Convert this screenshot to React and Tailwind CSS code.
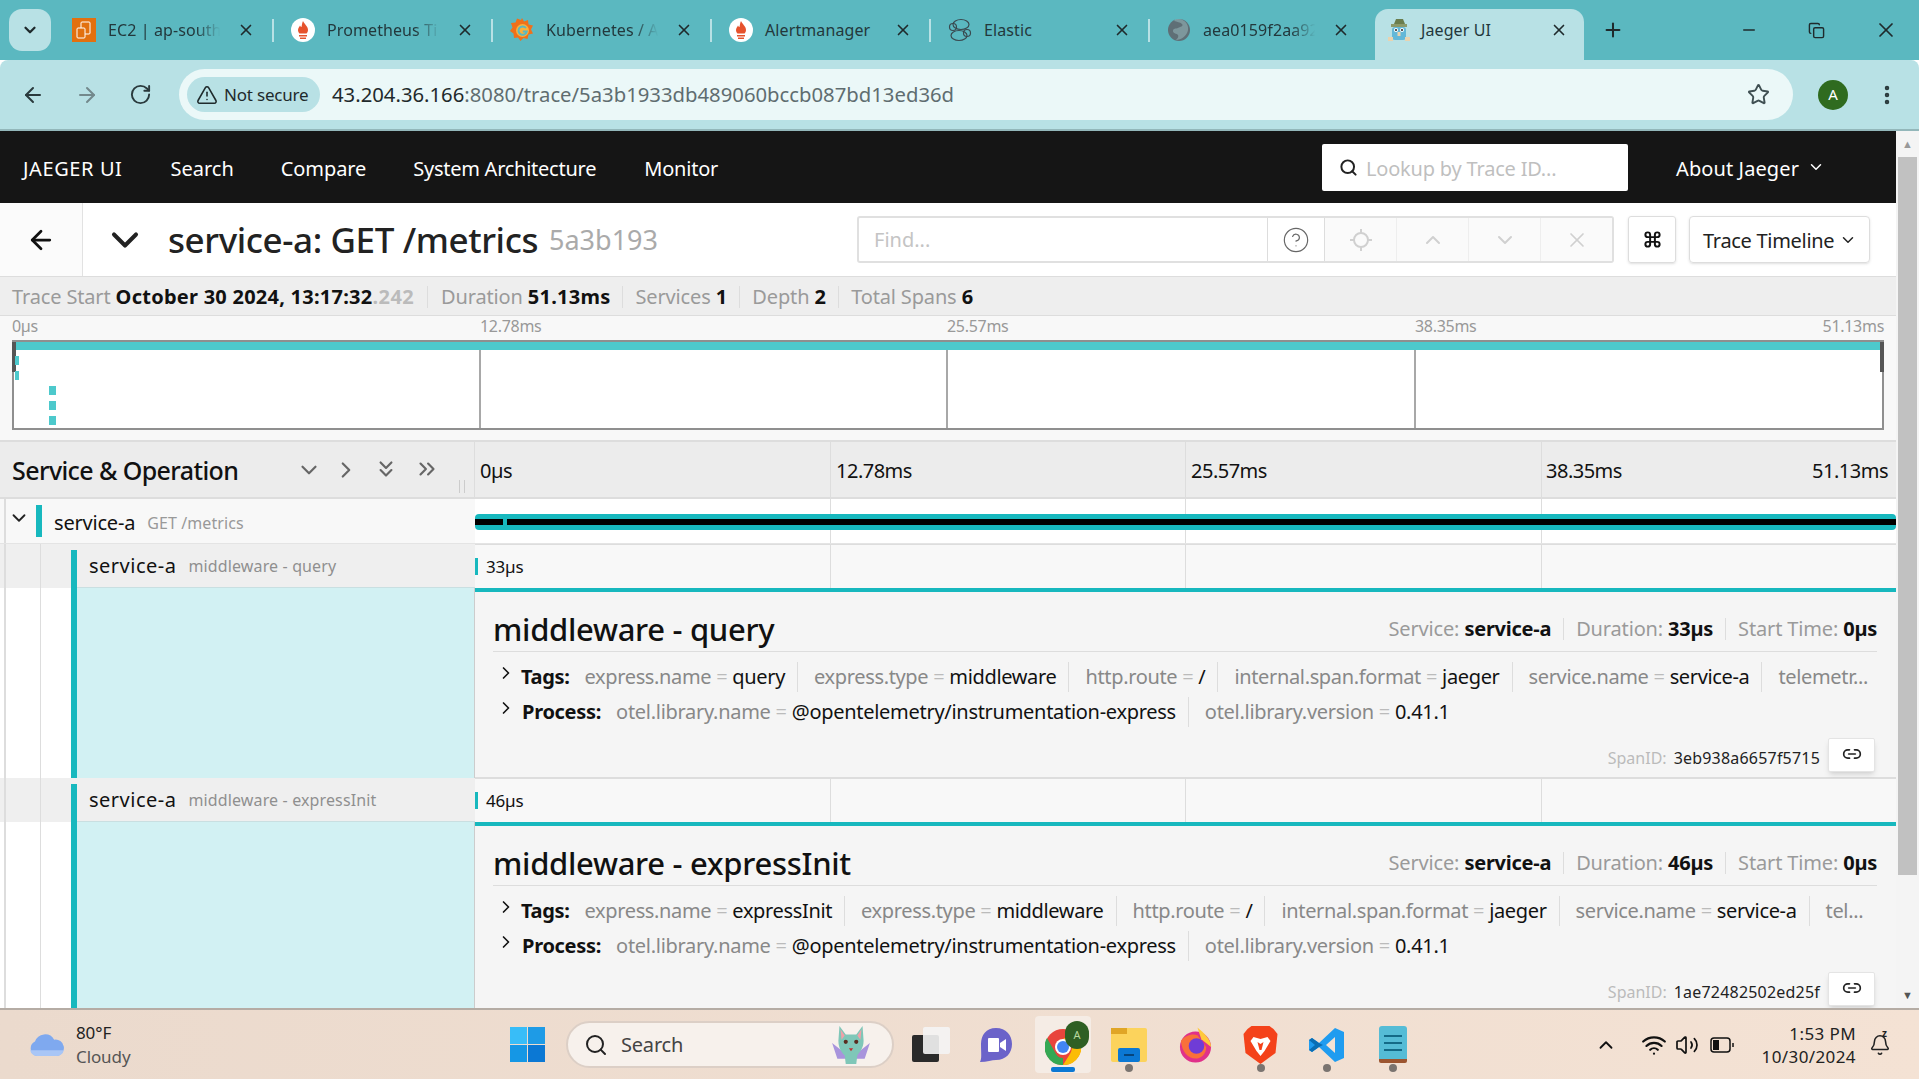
import { ArrowLeft, ArrowRight, RotateCw, Star, EllipsisVertical, ChevronDown, ChevronUp, ChevronRight, ChevronsDown, ChevronsRight, Search, TriangleAlert, X, Plus, Minus, Copy, CircleHelp, Command, Link2, Wifi, Volume2, Bell } from 'lucide-react';

const Flame = () => (
  <svg viewBox="0 0 24 24" className="w-6 h-6 shrink-0">
    <circle cx="12" cy="12" r="12" fill="#fff" />
    <path d="M12 3c1 3 5 5 5 9 0 2-1 3-1.500 3.500H8.500C8 15 7 14 7 12c0-2 1.500-3 2-4.500.5 1 1 1.500 1.500 1.500C11 7 11 5 12 3z" fill="#e6522c" />
    <path d="M8 17h8v1.500H8zM9 19.500h6V21H9z" fill="#e6522c" />
  </svg>
);

const Grafana = () => (
  <svg viewBox="0 0 24 24" className="w-6 h-6 shrink-0">
    <path d="M12 0l2 3.500 4-1.500 .500 4.500 4.500 1-2 4 2 4-4.500 1-1 4.500-4-1-3 3-2.500-3.500-4 .500-.500-4.500-3.500-2.500 2.500-3.500-1.500-4.500 4.500-.500 1.500-4 4 1.500z" fill="#f0701a" />
    <circle cx="12.500" cy="12.500" r="6.500" fill="#fbb03b" />
    <path d="M16 10a4.200 4.200 0 1 0 .8 3.500h-4" fill="none" stroke="#5bb8c0" strokeWidth="2" />
  </svg>
);

const Ec2 = () => (
  <svg viewBox="0 0 24 24" className="w-6 h-6 shrink-0">
    <rect width="24" height="24" fill="#e2700f" />
    <rect x="9" y="4" width="9" height="12" rx="1" fill="none" stroke="#fff" strokeWidth="1" />
    <rect x="5" y="10" width="8" height="10" rx="1" fill="#e2700f" stroke="#fff" strokeWidth="1" />
  </svg>
);

const Elastic = () => (
  <svg viewBox="0 0 24 24" className="w-6 h-6 shrink-0" fill="none" stroke="#3a4a50" strokeWidth="1.200">
    <ellipse cx="13" cy="6.500" rx="8" ry="5" />
    <ellipse cx="11" cy="17.500" rx="8" ry="5" />
    <circle cx="5" cy="9" r="3.500" />
    <circle cx="19" cy="15" r="3.500" />
  </svg>
);

const Globe = () => (
  <svg viewBox="0 0 24 24" className="w-6 h-6 shrink-0">
    <circle cx="12" cy="12" r="11" fill="#5f6f76" />
    <path d="M7 3c3 1 6 1 8 3s-2 3-4 4-5 0-5 3 4 2 5 4-1 4-2 5c5 0 11-4 12-10S17 1 12 1 8 2 7 3z" fill="#b8e1e5" opacity=".35" />
  </svg>
);

const Gopher = () => (
  <svg viewBox="0 0 24 24" className="w-6 h-6 shrink-0">
    <path d="M7 6l2-5h7l2 5z" fill="#6a7d4d" />
    <rect x="4" y="6" width="16" height="3" fill="#8b9a6b" />
    <rect x="5" y="9" width="14" height="13" rx="3" fill="#63b8d8" />
    <circle cx="9" cy="12" r="2" fill="#fff" />
    <circle cx="15" cy="12" r="2" fill="#fff" />
    <circle cx="9" cy="12" r="1" fill="#222" />
    <circle cx="15" cy="12" r="1" fill="#222" />
    <rect x="10.500" y="14" width="3" height="4" fill="#e8d3b0" />
    <rect x="1" y="19" width="5" height="4" fill="#e8d3b0" />
    <rect x="18" y="19" width="5" height="4" fill="#e8d3b0" />
  </svg>
);

const tabs = [
  { title: 'EC2 | ap-south', icon: <Ec2 />, fade: true },
  { title: 'Prometheus Ti', icon: <Flame />, fade: true },
  { title: 'Kubernetes / A', icon: <Grafana />, fade: true },
  { title: 'Alertmanager', icon: <Flame /> },
  { title: 'Elastic', icon: <Elastic /> },
  { title: 'aea0159f2aa92', icon: <Globe />, fade: true },
];

function Tab({ title, icon, fade, last }) {
  return (
    <div className="w-[219px] h-[30px] flex items-center pl-[17px] relative shrink-0">
      {icon}
      <div className="ml-3 w-[125px]">
        <span className={`block w-[122px] whitespace-nowrap text-[16px] text-[#23383c] tracking-[0.1px] ${fade ? '[mask-image:linear-gradient(to_right,black_72%,transparent_92%)]' : ''}`}>{title}</span>
      </div>
      <X size={18} strokeWidth={2.200} className="ml-[4px] text-[#1f2a2c]" />
      {!last && <div className="absolute right-0 top-[4px] w-[2px] h-[23px] bg-[#b8e1e5]"></div>}
    </div>
  );
}

function TabStrip() {
  return (
    <div className="h-[60px] bg-[#5bb8c0] flex items-center shrink-0 relative">
      <div className="ml-[9px] w-[42px] h-[42px] rounded-[13px] bg-[#b8e1e5] flex items-center justify-center mr-[4px]">
        <ChevronDown size={18} strokeWidth={3} className="text-[#1f2a2c]" />
      </div>
      {tabs.map((t, i) => <Tab key={t.title} title={t.title} icon={t.icon} fade={t.fade} last={i === 5} />)}
      <div className="w-[209px] h-[51px] self-end ml-[6px] rounded-t-[13px] bg-[#b8e1e5] flex items-center pl-[12px] pb-[9px] shrink-0">
        <Gopher />
        <span className="ml-[10px] w-[120px] text-[16px] text-[#23383c] tracking-[0.1px]">Jaeger UI</span>
        <X size={18} strokeWidth={2.200} className="ml-[9px] text-[#1f2a2c]" />
      </div>
      <Plus size={22} strokeWidth={2.200} className="ml-[18px] text-[#1f2a2c]" />
      <div className="ml-auto flex items-center text-[#1f2a2c]">
        <Minus size={18} strokeWidth={2} />
        <Copy size={17} strokeWidth={2} className="ml-[50px]" />
        <X size={24} strokeWidth={1.700} className="ml-[49px] mr-[21px]" />
      </div>
    </div>
  );
}

function Toolbar() {
  return (
    <div className="h-[71px] bg-[#b8e1e5] border-b-2 border-[#93b7ba] flex items-center shrink-0 rounded-t-[8px]">
      <ArrowLeft size={24} strokeWidth={2} className="ml-[21px] text-[#2a3a3d]" />
      <ArrowRight size={24} strokeWidth={2} className="ml-[30px] text-[#73898c]" />
      <RotateCw size={23} strokeWidth={2} className="ml-[30px] text-[#2a3a3d]" />
      <div className="ml-[27px] w-[1614px] h-[51px] rounded-full bg-[#ebf8f8] flex items-center pl-[8px]">
        <div className="h-[35px] w-[133px] rounded-full bg-[#b8e1e5] flex items-center pl-[9px] gap-[6px] whitespace-nowrap">
          <TriangleAlert size={22} strokeWidth={1.700} className="text-[#1f2a2c]" />
          <span className="text-[17px] text-[#1f2a2c] tracking-[-0.2px]">Not secure</span>
        </div>
        <span className="ml-[12px] text-[20.300px] whitespace-nowrap text-[#5f6d70]"><span className="text-[#1f2a2c]">43.204.36.166</span>:8080/trace/5a3b1933db489060bccb087bd13ed36d</span>
        <Star size={23} strokeWidth={2} className="ml-auto mr-[23px] text-[#3f4f52]" />
      </div>
      <div className="ml-[25px] w-[30px] h-[30px] rounded-full bg-[#2f6b1f] text-white text-[15px] flex items-center justify-center">A</div>
      <EllipsisVertical size={24} strokeWidth={2.500} className="ml-[27px] text-[#2a3a3d]" />
    </div>
  );
}

function JaegerNav() {
  return (
    <div className="h-[72px] bg-[#151515] flex items-center text-white text-[20px] shrink-0">
      <span className="ml-[23px] pt-[3px] tracking-[0.6px]">JAEGER UI</span>
      <span className="ml-[48px] pt-[3px]">Search</span>
      <span className="ml-[47px] pt-[3px] tracking-[-0.1px]">Compare</span>
      <span className="ml-[47px] pt-[3px] tracking-[-0.25px]">System Architecture</span>
      <span className="ml-[48px] pt-[3px] tracking-[-0.2px]">Monitor</span>
      <div className="ml-auto w-[306px] h-[47px] bg-white rounded-[2px] flex items-center pl-[17px] gap-[8px]">
        <Search size={19} strokeWidth={2.500} className="text-[#222]" />
        <span className="text-[#bfbfbf] pt-[3px] tracking-[-0.2px]">Lookup by Trace ID...</span>
      </div>
      <span className="ml-[48px] pt-[3px] tracking-[0.1px]">About Jaeger</span>
      <ChevronDown size={18} strokeWidth={2} className="ml-[8px] mr-[71px]" />
    </div>
  );
}

function TraceHeader() {
  return (
    <div className="h-[74px] bg-white flex items-center border-b border-[#ddd] shrink-0">
      <div className="w-[83px] h-full bg-[#fbfbfb] border-r border-[#e2e2e2] flex items-center justify-center">
        <ArrowLeft size={30} strokeWidth={2.200} className="text-[#111]" />
      </div>
      <ChevronDown size={44} strokeWidth={2.200} className="ml-[20px] text-[#222]" />
      <span className="ml-[21px] pt-[1px] text-[35px] text-[#222] font-medium tracking-[-0.4px] whitespace-nowrap">service-a: GET /metrics</span>
      <span className="ml-[11px] pt-[1px] text-[27px] text-[#aaa] whitespace-nowrap">5a3b193</span>
      <div className="ml-auto w-[757px] h-[47px] flex border-2 border-[#e0e0e0] rounded-[3px]">
        <div className="w-[409px] flex items-center pl-[15px] pt-[1px] text-[20px] text-[#c4c4c4] border-r border-[#ddd]">Find...</div>
        <div className="w-[57px] flex items-center justify-center border-r border-[#ddd]"><CircleHelp size={28} strokeWidth={1} className="text-[#666]" /></div>
        <div className="flex-1 flex items-center justify-center bg-[#fafafa] border-r border-[#eee]"><svg viewBox="0 0 24 24" className="w-[24px] h-[24px]" fill="none" stroke="#d0d0d0" strokeWidth="2"><circle cx="12" cy="12" r="7" /><path d="M12 1v4M12 19v4M1 12h4M19 12h4" /></svg></div>
        <div className="flex-1 flex items-center justify-center bg-[#fafafa] border-r border-[#eee]"><ChevronUp size={24} strokeWidth={2} className="text-[#d0d0d0]" /></div>
        <div className="flex-1 flex items-center justify-center bg-[#fafafa] border-r border-[#eee]"><ChevronDown size={24} strokeWidth={2} className="text-[#d0d0d0]" /></div>
        <div className="flex-1 flex items-center justify-center bg-[#fafafa]"><X size={24} strokeWidth={1.700} className="text-[#d0d0d0]" /></div>
      </div>
      <div className="ml-[14px] w-[48px] h-[47px] border border-[#ddd] rounded-[3px] shadow-sm flex items-center justify-center"><Command size={19} strokeWidth={2.500} className="text-[#111]" /></div>
      <div className="ml-[13px] mr-[26px] w-[181px] h-[47px] border border-[#ddd] rounded-[4px] shadow-sm flex items-center pl-[13px] text-[20px] text-[#222] tracking-[-0.3px] whitespace-nowrap">
        <span className="pt-[2px]">Trace Timeline</span>
        <ChevronDown size={18} strokeWidth={2} className="ml-[5px]" />
      </div>
    </div>
  );
}

function Stat({ label, value, extra, wide }) {
  return (
    <span className="whitespace-nowrap">
      <span className="text-[#9a9a9a] tracking-[-0.15px]">{label} </span>
      <span className={`font-bold text-[#111] ${wide ? 'tracking-[0.25px]' : 'tracking-[-0.25px]'}`}>{value}</span>
      {extra && <span className="font-bold text-[#bbb] tracking-[0.4px]">{extra}</span>}
    </span>
  );
}

function SummaryRow() {
  return (
    <div className="h-[39px] bg-[#eee] flex items-center text-[20px] pl-[12px] pt-[2px] shrink-0 border-b border-[#ddd]">
      <Stat wide label="Trace Start" value="October 30 2024, 13:17:32" extra=".242" />
      <div className="w-px h-[22px] bg-[#ddd] mx-[13px]"></div>
      <Stat wide label="Duration" value="51.13ms" />
      <div className="w-px h-[22px] bg-[#ddd] mx-[12px]"></div>
      <Stat wide label="Services" value="1" />
      <div className="w-px h-[22px] bg-[#ddd] mx-[12px]"></div>
      <Stat wide label="Depth" value="2" />
      <div className="w-px h-[22px] bg-[#ddd] mx-[12px]"></div>
      <Stat wide label="Total Spans" value="6" />
    </div>
  );
}

function Minimap() {
  return (
    <div className="h-[124px] bg-[#f8f8f8] border-b-2 border-[#ddd] px-[12px] shrink-0 box-content">
      <div className="h-[24px] flex text-[16px] text-[#999] tracking-[-0.3px] items-center pb-[4px]">
        <span className="w-[468px]">0µs</span>
        <span className="w-[467px]">12.78ms</span>
        <span className="w-[468px]">25.57ms</span>
        <span className="flex-1">38.35ms</span>
        <span>51.13ms</span>
      </div>
      <div className="h-[90px] bg-white border-2 border-[#8f8f8f] border-t-[#8f8f8f] relative flex">
        <div className="w-[467px] h-full border-r-2 border-[#a8a8a8]"></div>
        <div className="w-[467px] h-full border-r-2 border-[#a8a8a8]"></div>
        <div className="w-[468px] h-full border-r-2 border-[#a8a8a8]"></div>
        <div className="absolute left-0 right-0 top-0 h-[8px] bg-[#4dc9cc]"></div>
        <div className="absolute left-[-2px] top-0 w-[4px] h-[30px] bg-[#555]"></div>
        <div className="absolute right-[-2px] top-0 w-[4px] h-[30px] bg-[#555]"></div>
        <div className="absolute left-[1px] top-[14px] w-[4px] h-[9px] bg-[#4dc9cc]"></div>
        <div className="absolute left-[1px] top-[29px] w-[4px] h-[9px] bg-[#4dc9cc]"></div>
        <div className="absolute left-[35px] top-[44px] w-[7px] h-[9px] bg-[#4dc9cc]"></div>
        <div className="absolute left-[35px] top-[59px] w-[7px] h-[9px] bg-[#4dc9cc]"></div>
        <div className="absolute left-[35px] top-[74px] w-[7px] h-[9px] bg-[#4dc9cc]"></div>
      </div>
    </div>
  );
}

function GridLines() {
  return (
    <div className="absolute inset-0 flex pointer-events-none">
      <div className="w-[355.500px] border-r border-[#ddd]"></div>
      <div className="w-[355.500px] border-r border-[#ddd]"></div>
      <div className="w-[355.500px] border-r border-[#ddd]"></div>
    </div>
  );
}

function ColumnsHeader() {
  return (
    <div className="h-[57px] bg-[#ececec] flex border-b-2 border-[#ddd] shrink-0">
      <div className="w-[475px] flex items-center pl-[12px] border-r border-[#ddd] relative shrink-0">
        <span className="pt-[3px] text-[25px] font-medium tracking-[-0.6px] text-[#111] whitespace-nowrap">Service &amp; Operation</span>
        <ChevronDown size={26} strokeWidth={2} className="absolute left-[296px] top-[15px] text-[#666]" />
        <ChevronRight size={26} strokeWidth={2} className="absolute left-[333px] top-[15px] text-[#666]" />
        <ChevronsDown size={26} strokeWidth={2} className="absolute left-[373px] top-[14px] text-[#666]" />
        <ChevronsRight size={26} strokeWidth={2} className="absolute left-[414px] top-[14px] text-[#666]" />
        <div className="absolute left-[459px] top-[38px] w-[6px] h-[13px] border-x border-[#ccc]"></div>
      </div>
      <div className="flex-1 relative flex items-center pt-[3px] text-[20px] text-[#111] tracking-[-0.5px]">
        <GridLines />
        <span className="ml-[5px] w-[356px]">0µs</span>
        <span className="w-[355px]">12.78ms</span>
        <span className="w-[355px]">25.57ms</span>
        <span className="flex-1">38.35ms</span>
        <span className="mr-[8px]">51.13ms</span>
      </div>
    </div>
  );
}

function RootRow() {
  return (
    <div className="h-[45px] flex border-b border-[#e4e4e4] shrink-0">
      <div className="w-[475px] bg-[#f8f8f8] flex items-center relative shrink-0">
        <div className="absolute left-[4px] top-0 bottom-0 w-[2px] bg-[#ddd]"></div>
        <ChevronDown size={22} strokeWidth={2} className="ml-[8px] text-[#222] -mt-[6px]" />
        <div className="ml-[6px] w-[6px] h-[32px] bg-[#17b8be]"></div>
        <span className="ml-[12px] pt-[3px] text-[20px] text-[#111] tracking-[-0.2px]">service-a</span>
        <span className="ml-[12px] pt-[3px] text-[16px] text-[#999] tracking-[0.1px]">GET /metrics</span>
      </div>
      <div className="flex-1 bg-white relative">
        <GridLines />
        <div className="absolute left-0 right-0 top-[15px] h-[16px] bg-[#17b8be] rounded-[4px] flex items-center">
          <div className="w-full h-[6px] bg-black"></div>
        </div>
        <div className="absolute left-[28px] top-[20px] w-[4px] h-[6px] bg-[#17b8be]"></div>
      </div>
    </div>
  );
}

function Tag({ k, v, sep = true }) {
  return (
    <span className={`whitespace-nowrap pr-[12px] mr-[16px] h-[30px] flex items-center ${sep ? 'border-r border-[#ddd]' : ''}`}>
      <span className="text-[#888]">{k}</span>
      <span className="text-[#bbb] mx-[5px]">=</span>
      <span className="text-[#111]">{v}</span>
    </span>
  );
}

function SpanBlock({ op, duration, tags, more, spanId }) {
  return (
    <div className="flex shrink-0 flex-col">
      <div className="h-[44px] flex shrink-0">
        <div className="w-[475px] bg-[#efefef] relative flex shrink-0">
          <div className="absolute left-[4px] top-0 bottom-0 w-[2px] bg-[#ddd]"></div>
          <div className="absolute left-[40px] top-0 bottom-0 w-px bg-[#ddd]"></div>
          <div className="ml-[71px] mt-[6px] w-[6px] bg-[#17b8be]"></div>
          <div className="flex-1 flex items-center pl-[12px] border-b border-[#c9dfe1] whitespace-nowrap">
            <span className="text-[20px] text-[#111] tracking-[0.5px]">service-a</span>
            <span className="ml-[12px] text-[16px] text-[#8f8f8f] tracking-[0.13px]">middleware - {op}</span>
          </div>
        </div>
        <div className="flex-1 bg-[#f8f8f8] relative flex items-center border-t border-[#ddd]">
          <GridLines />
          <div className="w-[3px] h-[17px] bg-[#17b8be]"></div>
          <span className="ml-[8px] text-[17px] text-[#111] tracking-[-0.2px]">{duration}</span>
        </div>
      </div>
      <div className="h-[190px] flex shrink-0">
        <div className="w-[475px] bg-white relative flex shrink-0 border-r border-[#ccc]">
          <div className="absolute left-[4px] top-0 bottom-0 w-[2px] bg-[#ddd]"></div>
          <div className="absolute left-[40px] top-0 bottom-0 w-px bg-[#ddd]"></div>
          <div className="ml-[71px] w-[6px] bg-[#17b8be]"></div>
          <div className="flex-1 bg-[#d2f1f3]"></div>
        </div>
        <div className="flex-1 min-w-0 bg-[#f5f5f5] border-t-4 border-[#17b8be] border-b border-b-[#ddd] pl-[18px] pr-[19px]">
          <div className="h-[60px] flex items-center justify-between border-b border-[#ddd] pt-[15px]">
            <span className="text-[31px] font-medium tracking-[-0.3px] text-[#111]">middleware - {op}</span>
            <div className="flex items-center text-[20px]">
              <Stat label="Service:" value="service-a" />
              <div className="w-px h-[22px] bg-[#ddd] mx-[12px]"></div>
              <Stat label="Duration:" value={duration} />
              <div className="w-px h-[22px] bg-[#ddd] mx-[12px]"></div>
              <Stat label="Start Time:" value="0µs" />
            </div>
          </div>
          <div className="mt-[10px] h-[30px] flex items-center text-[20px] tracking-[-0.35px] overflow-hidden">
            <ChevronRight size={20} strokeWidth={2} className="text-[#111] -mt-[8px] ml-[3px] shrink-0" />
            <span className="font-bold text-[#111] ml-[5px] mr-[15px]">Tags:</span>
            {tags.map(t => <Tag key={t[0]} k={t[0]} v={t[1]} />)}
            <span className="text-[#888] whitespace-nowrap">{more}</span>
          </div>
          <div className="mt-[5px] h-[30px] flex items-center text-[20px] tracking-[-0.29px]">
            <ChevronRight size={20} strokeWidth={2} className="text-[#111] -mt-[8px] ml-[3px] shrink-0" />
            <span className="font-bold text-[#111] ml-[6px] mr-[15px]">Process:</span>
            <Tag k="otel.library.name" v="@opentelemetry/instrumentation-express" />
            <Tag k="otel.library.version" v="0.41.1" sep={false} />
          </div>
          <div className="mt-[11px] flex items-center justify-end">
            <span className="text-[16px] text-[#bbb] mt-[6px]">SpanID:</span>
            <span className="ml-[7px] text-[16px] text-[#222] mt-[6px] tracking-[0.2px]">{spanId}</span>
            <div className="ml-[8px] mr-[2px] w-[47px] h-[34px] bg-white border border-[#e4e4e4] rounded-[2px] shadow-md flex items-center justify-center"><Link2 size={20} strokeWidth={2} className="text-[#222] -mt-[3px]" /></div>
          </div>
        </div>
      </div>
    </div>
  );
}

function Scrollbar() {
  return (
    <div className="w-[23px] bg-[#f4f4f4] flex flex-col items-center shrink-0 relative">
      <div className="h-[26px] flex items-center justify-center text-[#999] text-[11px]">▲</div>
      <div className="w-[19px] h-[718px] bg-[#c1c1c1]"></div>
      <div className="mt-auto h-[26px] flex items-center justify-center text-[#555] text-[11px]">▼</div>
    </div>
  );
}

const RunDot = ({ bottom }) => <div className={`absolute left-1/2 -translate-x-1/2 w-[8px] h-[8px] rounded-full bg-[#7a7470] ${bottom}`}></div>;

function Taskbar() {
  return (
    <div className="h-[71px] bg-gradient-to-r from-[#ebdacd] to-[#f4e2d4] border-t-2 border-[#b5aca4] flex items-center relative shrink-0 text-[#222]">
      <svg viewBox="0 0 38 26" className="ml-[28px] w-[37px] h-[25px] shrink-0"><path d="M9 25a8 8 0 0 1-2-15 11 11 0 0 1 20-2 8 8 0 0 1 3 17z" fill="#7fa9ef" /><path d="M9 25a8 8 0 0 1-7-6h35a8 8 0 0 1-7 6z" fill="#a9c6f6" /></svg>
      <div className="ml-[11px] w-[80px] leading-[24px] text-[17px] tracking-[-0.1px]">
        <div>80°F</div>
        <div className="text-[#555]">Cloudy</div>
      </div>
      <div className="ml-[354px] w-[35px] h-[35px] grid grid-cols-2 gap-[1px] shrink-0">
        <div className="bg-[#38bdf8]"></div><div className="bg-[#1e9be6]"></div><div className="bg-[#1597e5]"></div><div className="bg-[#0b78d4]"></div>
      </div>
      <div className="ml-[21px] w-[328px] h-[47px] rounded-full bg-[#f7f1ec] border-2 border-[#dccfc6] flex items-center pl-[16px] shrink-0">
        <Search size={24} strokeWidth={2} className="text-[#222]" />
        <span className="ml-[13px] text-[20px] text-[#444] tracking-[-0.2px]">Search</span>
        <svg viewBox="0 0 40 40" className="ml-auto mr-[20px] w-[42px] h-[42px]"><path d="M2 18l10 8 16 0 10-8-5 15-26 0z" fill="#a894dc" /><path d="M9 2l6 8h10l6-8 1 14c0 8-5 12-6 14l-1 8h-10l-1-8c-2-2-6-6-6-14z" fill="#7fc7b8" /><path d="M10 5l4 6-3 4zM30 5l-4 6 3 4z" fill="#f0a0a8" /><circle cx="15" cy="17" r="2" fill="#5a2d20" /><circle cx="25" cy="17" r="2" fill="#5a2d20" /><path d="M18 23h4l-2 3z" fill="#c03030" /></svg>
      </div>
      <div className="ml-[18px] w-[38px] h-[35px] relative shrink-0">
        <div className="absolute left-0 bottom-0 w-[27px] h-[27px] bg-[#2a2a2a] rounded-[2px]"></div>
        <div className="absolute right-0 top-0 w-[27px] h-[27px] bg-[#f4f4f4]/90 rounded-[2px]"></div>
      </div>
      <svg viewBox="0 0 36 36" className="ml-[28px] w-[36px] h-[36px] shrink-0"><path d="M18 1c10 0 16 7 16 16s-6 16-16 16c-4 0-9 2-16 2 2-4 1-8 1-18C3 8 8 1 18 1z" fill="#6b63c9" /><rect x="10" y="11" width="11" height="14" rx="1" fill="#fff" /><path d="M22 16l6-4v12l-6-4z" fill="#fff" /></svg>
      <div className="ml-[21px] w-[56px] h-[57px] bg-[#f5ece5] rounded-[4px] relative shrink-0">
        <svg viewBox="0 0 36 36" className="absolute left-[10px] top-[13px] w-[36px] h-[36px]"><circle cx="18" cy="18" r="18" fill="#e8453c" /><path d="M18 36A18 18 0 0 1 2 9l9 16c2 3 4 4 7 4z" fill="#34a853" /><path d="M18 36a18 18 0 0 0 16-27H18l7 5c3 4 2 7 0 11z" fill="#fbbc05" /><circle cx="18" cy="18" r="8" fill="#fff" /><circle cx="18" cy="18" r="6" fill="#4285f4" /></svg>
        <div className="absolute left-[30px] top-[5px] w-[24px] h-[28px] rounded-full bg-[#2f5f24] text-[#b9d99f] text-[11px] flex items-center justify-center">A</div>
        <div className="absolute left-[16px] bottom-[1px] w-[24px] h-[5px] rounded-[2px] bg-[#0b78d4]"></div>
      </div>
      <div className="ml-[20px] w-[36px] h-[34px] relative shrink-0">
        <div className="absolute inset-0 rounded-[2px] bg-[#fcd35c]"></div>
        <div className="absolute left-0 top-0 w-[16px] h-[6px] bg-[#e0a526]"></div>
        <div className="absolute left-[7px] top-[20px] w-[22px] h-[14px] rounded-[2px] bg-[#0b78d4]"></div>
        <div className="absolute left-[13px] top-[26px] w-[10px] h-[2px] bg-[#06457c]"></div>
        <RunDot bottom="bottom-[-10px]" />
      </div>
      <svg viewBox="0 0 36 36" className="ml-[31px] w-[35px] h-[36px] shrink-0"><circle cx="18" cy="20" r="16" fill="#e0318a" /><path d="M20 0c6 5 14 12 14 20L24 12z" fill="#ffc93a" /><path d="M3 14c4-6 12-8 17-6l9 12c0 7-5 12-11 12-8 0-14-7-15-18z" fill="#f9703a" /><circle cx="19" cy="19" r="8" fill="#6f3cd6" /></svg>
      <div className="ml-[29px] w-[37px] h-[40px] relative shrink-0">
        <svg viewBox="0 0 36 40" className="w-[37px] h-[40px]"><path d="M9 1h18l4 3 4 5-2 19-15 11-15-11L1 9l4-5z" fill="#f4421a" /><path d="M11 12l7 2 7-2 3 4-6 10-4 5-4-5-6-10z" fill="#fff" /><path d="M15 17l3 2 3-2-2 8h-2z" fill="#f4421a" /></svg>
        <RunDot bottom="bottom-[-7px]" />
      </div>
      <div className="ml-[30px] w-[36px] h-[36px] relative shrink-0">
        <svg viewBox="0 0 36 36" className="w-[36px] h-[36px]"><path d="M26 1l9 4v26l-9 4L10 20l-7 5-3-2v-10l3-2 7 5z" fill="#1f9cf0" /><path d="M26 10v16l-9-8z" fill="#f4e2d4" /><path d="M10 20l-7 5-3-2 6-5-6-5 3-2 7 5 4 2z" fill="#0a6eb4" /></svg>
        <RunDot bottom="bottom-[-9px]" />
      </div>
      <div className="ml-[34px] w-[28px] h-[37px] flex flex-col relative shrink-0">
        <div className="flex-1 bg-[#55bcd6] rounded-t-[3px] flex flex-col justify-center gap-[5px] px-[5px]"><div className="h-[2px] bg-[#146a87]"></div><div className="h-[2px] bg-[#146a87]"></div><div className="h-[2px] bg-[#146a87]"></div></div>
        <div className="h-[4px] bg-[#9c5530] rounded-b-[2px]"></div>
        <RunDot bottom="bottom-[-9px]" />
      </div>
      <ChevronUp size={22} strokeWidth={2} className="ml-[188px] text-[#111]" />
      <Wifi size={26} strokeWidth={2} className="ml-[24px] text-[#111]" />
      <Volume2 size={24} strokeWidth={1.700} className="ml-[8px] text-[#111]" />
      <svg viewBox="0 0 24 16" className="ml-[11px] w-[24px] h-[16px] shrink-0" fill="none" stroke="#111" strokeWidth="1.500"><rect x="1" y="1" width="19" height="14" rx="3" /><rect x="3" y="3" width="6" height="10" fill="#111" stroke="none" /><path d="M23 6v4" /></svg>
      <div className="ml-auto text-right text-[17px] leading-[23px] tracking-[0.4px] whitespace-nowrap">
        <div>1:53 PM</div>
        <div>10/30/2024</div>
      </div>
      <div className="ml-[13px] mr-[28px] relative shrink-0">
        <Bell size={22} strokeWidth={1.700} className="text-[#222]" />
        <span className="absolute left-[13px] top-[-8px] text-[10px] font-bold text-[#222]">z</span>
      </div>
    </div>
  );
}

export default function App() {
  return (
    <div className="h-screen overflow-hidden flex flex-col font-['Noto_Sans',sans-serif]">
      <TabStrip />
      <Toolbar />
      <div className="flex-1 min-h-0 flex">
        <div className="flex-1 min-w-0 flex flex-col overflow-hidden bg-white">
          <JaegerNav />
          <TraceHeader />
          <SummaryRow />
          <Minimap />
          <ColumnsHeader />
          <RootRow />
          <SpanBlock
            op="query"
            duration="33µs"
            tags={[['express.name', 'query'], ['express.type', 'middleware'], ['http.route', '/'], ['internal.span.format', 'jaeger'], ['service.name', 'service-a']]}
            more="telemetr..."
            spanId="3eb938a6657f5715"
          />
          <SpanBlock
            op="expressInit"
            duration="46µs"
            tags={[['express.name', 'expressInit'], ['express.type', 'middleware'], ['http.route', '/'], ['internal.span.format', 'jaeger'], ['service.name', 'service-a']]}
            more="tel..."
            spanId="1ae72482502ed25f"
          />
        </div>
        <Scrollbar />
      </div>
      <Taskbar />
    </div>
  );
}
